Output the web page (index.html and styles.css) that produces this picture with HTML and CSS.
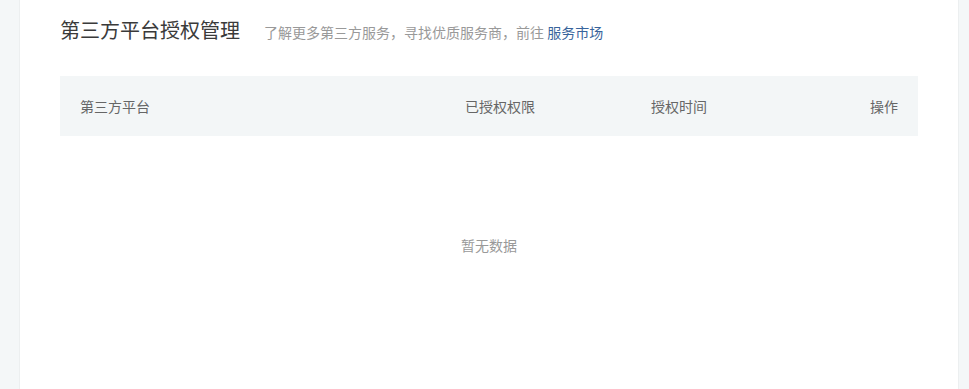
FILE: index.html
```html
<!DOCTYPE html>
<html lang="zh-CN">
<head>
  <meta charset="UTF-8">
  <title>第三方平台授权管理</title>
  <link rel="stylesheet" href="styles.css">
</head>
<body>

  <div class="card">
    <div class="title-row">
      <h1>第三方平台授权管理</h1>
      <span class="tip">了解更多第三方服务，寻找优质服务商，前往 <a href="#">服务市场</a></span>
    </div>

    <table>
      <thead>
        <tr>
          <th class="c-name">第三方平台</th>
          <th class="c-perm">已授权权限</th>
          <th class="c-time">授权时间</th>
          <th class="c-op">操作</th>
        </tr>
      </thead>
      <tbody>
        <tr><td colspan="4" class="empty">暂无数据</td></tr>
      </tbody>
    </table>
  </div>

</body>
</html>
```

FILE: styles.css
```css
html, body {
  height: 100%;
}
body {
  margin: 0;
  padding: 0 10px 0 19px;
  background-color: #f4f7f8;
  font-family: "Noto Sans CJK SC", "Liberation Sans", sans-serif;
  box-sizing: border-box;
}
.card {
  background: white;
  border-left: 1px solid #eceff0;
  border-right: 1px solid #eceff0;
  min-height: 100%;
  padding: 0 40px;
}
.title-row {
  display: flex;
  align-items: baseline;
  height: 60px;
  padding-top: 15px;
  box-sizing: border-box;
}
h1 {
  margin: 0;
  font-size: 20px;
  font-weight: normal;
  color: #3a3a3a;
  line-height: 30px;
}
.tip {
  margin-left: 24px;
  font-size: 14px;
  color: #999;
}
.tip a {
  color: #38649c;
  text-decoration: none;
}
table {
  width: 100%;
  margin-top: 16px;
  border-collapse: collapse;
  table-layout: fixed;
}
th {
  background-color: #f3f6f7;
  color: #666;
  font-size: 14px;
  font-weight: normal;
  height: 60px;
  padding: 0 20px;
  text-align: left;
}
.c-name { width: 345px; }
.c-perm { width: 146px; }
.c-time { width: auto; }
.c-op { width: 60px; text-align: right; }
.empty {
  height: 216px;
  text-align: center;
  color: #999;
  font-size: 14px;
}
```
